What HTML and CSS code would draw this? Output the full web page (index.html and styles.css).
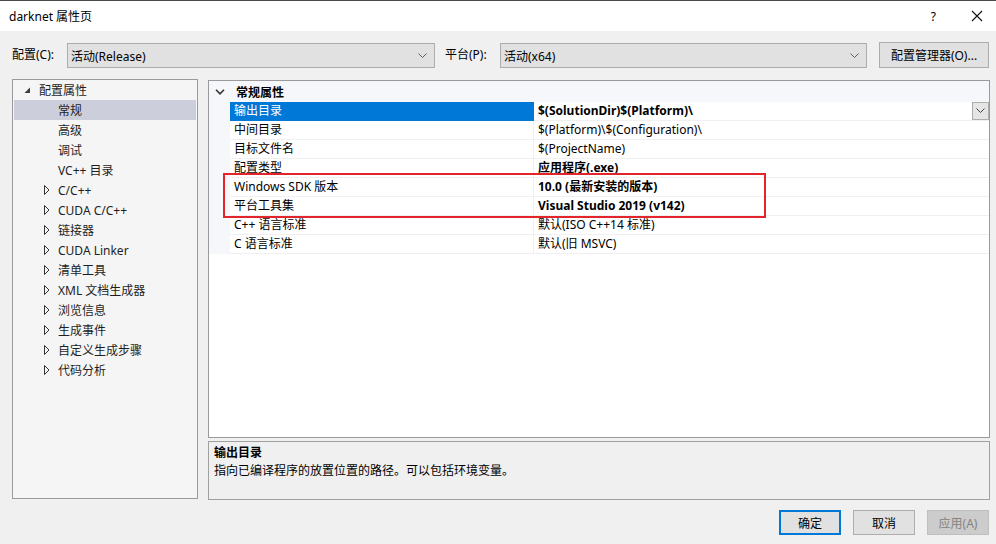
FILE: index.html
```html
<!DOCTYPE html>
<html lang="zh-CN">
<head>
    <meta charset="UTF-8">
    <title>darknet 属性页</title>
    <link rel="stylesheet" href="styles.css">
</head>
<body>

<div class="window">
    <div class="titlebar">
        <span class="title">darknet 属性页</span>
        <span class="help">?</span>
        <svg class="close" width="12" height="12" viewBox="0 0 12 12"><path d="M1 1L11 11M11 1L1 11" stroke="#111" stroke-width="1.1" fill="none"/></svg>
    </div>

    <div class="toolbar">
        <span class="label">配置(C):</span>
        <div class="select">
            <span>活动(Release)</span>
            <svg width="9" height="6" viewBox="0 0 9 6"><path d="M0.5 0.5L4.5 4.5L8.5 0.5" stroke="#606060" fill="none"/></svg>
        </div>
        <span class="label label-p">平台(P):</span>
        <div class="select select-p">
            <span>活动(x64)</span>
            <svg width="9" height="6" viewBox="0 0 9 6"><path d="M0.5 0.5L4.5 4.5L8.5 0.5" stroke="#606060" fill="none"/></svg>
        </div>
        <button class="btn btn-manager">配置管理器(O)...</button>
    </div>

    <div class="main">
        <!-- arbre de gauche -->
        <div class="tree">
            <div class="tree-row root">
                <svg class="arrow" width="7" height="7" viewBox="0 0 7 7"><polygon points="6,0.5 6,6 0.5,6" fill="#3c3c3c"/></svg>
                <span>配置属性</span>
            </div>
            <div class="tree-row child selected"><span>常规</span></div>
            <div class="tree-row child"><span>高级</span></div>
            <div class="tree-row child"><span>调试</span></div>
            <div class="tree-row child"><span>VC++ 目录</span></div>
            <div class="tree-row child closed">
                <svg class="arrow" width="6" height="10" viewBox="0 0 6 10"><polygon points="0.5,0.5 5,5 0.5,9.5" fill="none" stroke="#333"/></svg>
                <span>C/C++</span>
            </div>
            <div class="tree-row child closed">
                <svg class="arrow" width="6" height="10" viewBox="0 0 6 10"><polygon points="0.5,0.5 5,5 0.5,9.5" fill="none" stroke="#333"/></svg>
                <span>CUDA C/C++</span>
            </div>
            <div class="tree-row child closed">
                <svg class="arrow" width="6" height="10" viewBox="0 0 6 10"><polygon points="0.5,0.5 5,5 0.5,9.5" fill="none" stroke="#333"/></svg>
                <span>链接器</span>
            </div>
            <div class="tree-row child closed">
                <svg class="arrow" width="6" height="10" viewBox="0 0 6 10"><polygon points="0.5,0.5 5,5 0.5,9.5" fill="none" stroke="#333"/></svg>
                <span>CUDA Linker</span>
            </div>
            <div class="tree-row child closed">
                <svg class="arrow" width="6" height="10" viewBox="0 0 6 10"><polygon points="0.5,0.5 5,5 0.5,9.5" fill="none" stroke="#333"/></svg>
                <span>清单工具</span>
            </div>
            <div class="tree-row child closed">
                <svg class="arrow" width="6" height="10" viewBox="0 0 6 10"><polygon points="0.5,0.5 5,5 0.5,9.5" fill="none" stroke="#333"/></svg>
                <span>XML 文档生成器</span>
            </div>
            <div class="tree-row child closed">
                <svg class="arrow" width="6" height="10" viewBox="0 0 6 10"><polygon points="0.5,0.5 5,5 0.5,9.5" fill="none" stroke="#333"/></svg>
                <span>浏览信息</span>
            </div>
            <div class="tree-row child closed">
                <svg class="arrow" width="6" height="10" viewBox="0 0 6 10"><polygon points="0.5,0.5 5,5 0.5,9.5" fill="none" stroke="#333"/></svg>
                <span>生成事件</span>
            </div>
            <div class="tree-row child closed">
                <svg class="arrow" width="6" height="10" viewBox="0 0 6 10"><polygon points="0.5,0.5 5,5 0.5,9.5" fill="none" stroke="#333"/></svg>
                <span>自定义生成步骤</span>
            </div>
            <div class="tree-row child closed">
                <svg class="arrow" width="6" height="10" viewBox="0 0 6 10"><polygon points="0.5,0.5 5,5 0.5,9.5" fill="none" stroke="#333"/></svg>
                <span>代码分析</span>
            </div>
        </div>

        <div class="right">
            <!-- grille des propriétés -->
            <div class="grid">
                <div class="category">
                    <svg class="cat-arrow" width="10" height="6" viewBox="0 0 10 6"><path d="M1 0.8L5 4.8L9 0.8" stroke="#333" stroke-width="1.6" fill="none"/></svg>
                    <span>常规属性</span>
                </div>
                <div class="prop selected">
                    <div class="name">输出目录</div>
                    <div class="value bold">
                        <span>$(SolutionDir)$(Platform)\</span>
                        <div class="drop">
                            <svg width="9" height="6" viewBox="0 0 9 6"><path d="M0.5 0.5L4.5 4.5L8.5 0.5" stroke="#444" fill="none"/></svg>
                        </div>
                    </div>
                </div>
                <div class="prop">
                    <div class="name">中间目录</div>
                    <div class="value">$(Platform)\$(Configuration)\</div>
                </div>
                <div class="prop">
                    <div class="name">目标文件名</div>
                    <div class="value">$(ProjectName)</div>
                </div>
                <div class="prop">
                    <div class="name">配置类型</div>
                    <div class="value bold">应用程序(.exe)</div>
                </div>
                <div class="prop">
                    <div class="name">Windows SDK 版本</div>
                    <div class="value bold">10.0 (最新安装的版本)</div>
                </div>
                <div class="prop">
                    <div class="name">平台工具集</div>
                    <div class="value bold">Visual Studio 2019 (v142)</div>
                </div>
                <div class="prop">
                    <div class="name">C++ 语言标准</div>
                    <div class="value">默认(ISO C++14 标准)</div>
                </div>
                <div class="prop">
                    <div class="name">C 语言标准</div>
                    <div class="value">默认(旧 MSVC)</div>
                </div>
                <div class="highlight"></div>
            </div>

            <div class="desc">
                <div class="desc-title">输出目录</div>
                <div class="desc-text">指向已编译程序的放置位置的路径。可以包括环境变量。</div>
            </div>
        </div>
    </div>

    <div class="footer">
        <button class="btn btn-ok">确定</button>
        <button class="btn">取消</button>
        <button class="btn btn-disabled">应用(A)</button>
    </div>
</div>

</body>
</html>
```

FILE: styles.css
```css
body {
    margin: 0;
    background: #f0f0f0;
    color: #000;
    font-family: "Noto Sans", "Noto Sans CJK SC", sans-serif;
    font-size: 12px;
}
.window { width: 996px; height: 544px; overflow: hidden; }

.titlebar {
    height: 30px;
    border-top: 1px solid #4a4a4a;
    background: #fff;
    display: flex;
    align-items: center;
    padding-left: 9px;
}
.title { font-size: 12px; flex: 1; }
.help { margin-right: 35px; font-size: 12px; }
.close { margin-right: 13px; }

.toolbar {
    display: flex;
    align-items: flex-start;
    padding: 11px 0 0 12px;
    height: 26px;
}
.label { width: 55px; line-height: 26px; }
.label-p { margin-left: 10px; }
.select {
    box-sizing: border-box;
    width: 368px;
    height: 25px;
    margin-top: 1px;
    background: #e1e1e1;
    border: 1px solid #adadad;
    display: flex;
    align-items: center;
    justify-content: space-between;
    padding: 0 7px 0 3px;
}
.select-p { width: 367px; }

.btn {
    box-sizing: border-box;
    font-family: inherit;
    font-size: 12px;
    background: #e1e1e1;
    border: 1px solid #adadad;
    color: #000;
    height: 25px;
    width: 62px;
    padding: 0;
}
.btn-manager { width: 110px; height: 26px; margin-left: 12px; }

.main {
    display: flex;
    margin: 11px 0 0 12px;
}
.tree {
    box-sizing: border-box;
    width: 186px;
    height: 420px;
    background: #f5f5f5;
    border: 1px solid #9a9a9a;
    padding: 0 1px;
}
.tree-row {
    height: 20px;
    display: flex;
    align-items: center;
    position: relative;
    color: #1e1e1e;
}
.tree-row.root { padding-left: 25px; }
.tree-row.root .arrow { position: absolute; left: 10px; top: 7px; }
.tree-row.child { padding-left: 44px; }
.tree-row.closed .arrow { position: absolute; left: 30px; top: 5px; }
.tree-row.selected { background: #cccedb; }

.right { margin-left: 10px; width: 782px; }
.grid {
    box-sizing: border-box;
    position: relative;
    height: 358px;
    margin-top: 1px;
    background: #fff;
    border: 1px solid #9a9a9a;
}
.category {
    height: 21px;
    background: #f5f7fa;
    display: flex;
    align-items: center;
    font-weight: bold;
}
.cat-arrow { margin: 0 11px 0 6px; }
.prop {
    display: flex;
    height: 19px;
    background: #f5f7fa;
}
.prop .name {
    box-sizing: border-box;
    margin-left: 21px;
    width: 304px;
    padding-left: 4px;
    line-height: 18px;
    background: #fff;
    border-bottom: 1px solid #f0f0f0;
    border-right: 1px solid #f0f0f0;
}
.prop .value {
    box-sizing: border-box;
    flex: 1;
    padding-left: 4px;
    line-height: 18px;
    background: #fff;
    border-bottom: 1px solid #f0f0f0;
    display: flex;
    justify-content: space-between;
}
.bold { font-weight: bold; }
.prop.selected .name { background: #0078d7; color: #fff; border-color: #0078d7; }
.drop {
    box-sizing: border-box;
    width: 17px;
    height: 18px;
    background: #e5e5e5;
    border: 1px solid #adadad;
    display: flex;
    align-items: center;
    justify-content: center;
}
.highlight {
    position: absolute;
    left: 14px;
    top: 92px;
    width: 539px;
    height: 41px;
    border: 2px solid #e3242b;
}

.desc {
    box-sizing: border-box;
    height: 59px;
    margin-top: 3px;
    border: 1px solid #a0a0a0;
    padding: 2px 5px;
}
.desc-title { font-weight: bold; line-height: 18px; }
.desc-text { line-height: 18px; }

.footer {
    display: flex;
    justify-content: flex-end;
    gap: 12px;
    padding: 10px 7px 0 0;
}
.btn-ok { border: 2px solid #0078d7; }
.btn-disabled { background: #cccccc; border-color: #bfbfbf; color: #838383; }
```
